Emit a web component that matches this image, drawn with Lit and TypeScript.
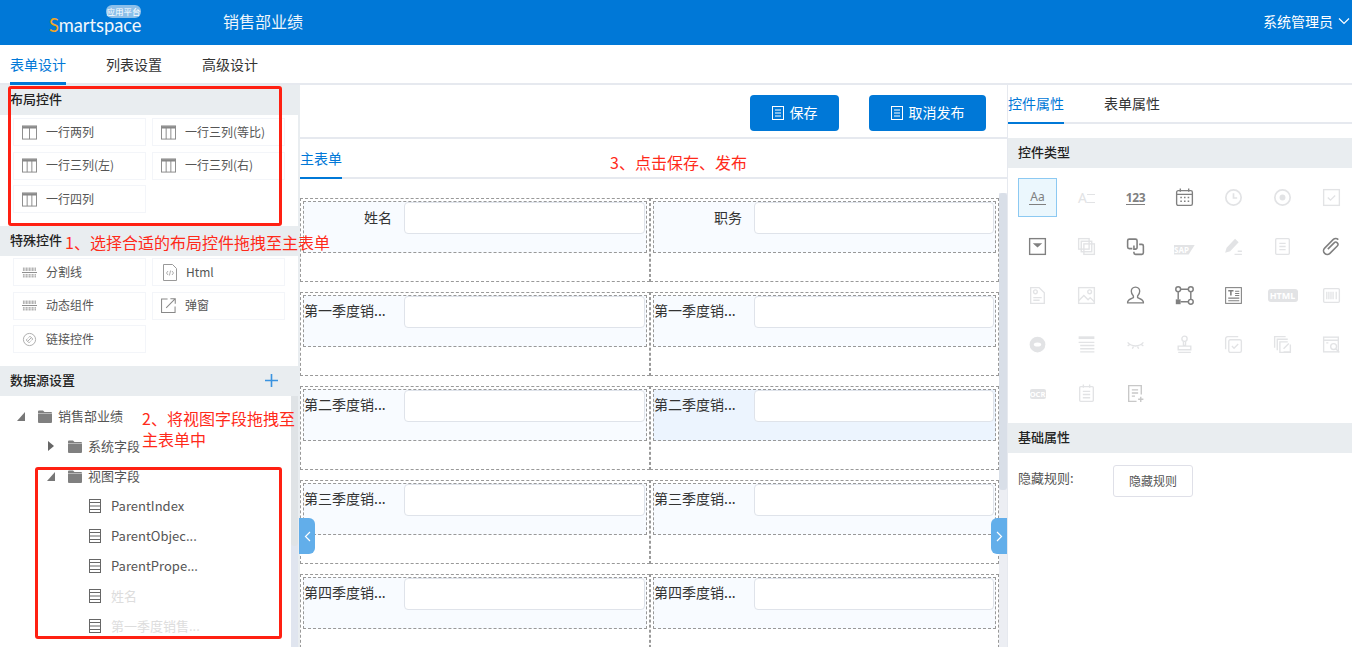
import { LitElement, html, css, svg } from "lit";
import { customElement } from "lit/decorators.js";

const I = (c: unknown) => html`<svg class="ci" viewBox="0 0 20 20" fill="none" stroke="currentColor" stroke-width="1.300">${c}</svg>`;

const TYPES: { on?: boolean; mid?: boolean; sel?: boolean; icon: unknown }[] = [
  { on: true, sel: true, icon: html`<span class="aa">Aa</span>` },
  { icon: html`<span class="ae">A<i></i></span>` },
  { on: true, icon: html`<span class="n123">123</span>` },
  { on: true, icon: I(svg`<rect x="2.500" y="3.500" width="15" height="14" rx="1.500"/><path d="M6 1.500v3M14 1.500v3M2.500 7h15"/><path d="M6 10h1.500M9.500 10H11M13 10h1.500M6 13.500h1.500M9.500 13.500H11M13 13.500h1.500" stroke-width="1.500"/>`) },
  { icon: I(svg`<circle cx="10" cy="10" r="7.300" stroke-width="1.600"/><path d="M10 6v4.500h3.500" stroke-width="1.600"/>`) },
  { icon: I(svg`<circle cx="10" cy="10" r="7.300" stroke-width="1.600"/><circle cx="10" cy="10" r="2.800" fill="currentColor" stroke="none"/>`) },
  { icon: I(svg`<rect x="2.500" y="2.500" width="15" height="15"/><path d="M6.500 10l2.500 2.500 4.500-4.500"/>`) },

  { on: true, icon: I(svg`<rect x="2.500" y="2.500" width="15" height="15"/><path d="M5.500 7h9L10 11z" fill="currentColor" stroke="none"/>`) },
  { icon: I(svg`<rect x="2.500" y="2.500" width="10" height="10"/><rect x="5" y="5" width="10" height="10"/><rect x="7.500" y="7.500" width="10" height="10"/>`) },
  { on: true, icon: I(svg`<path d="M7 12H4a1.500 1.500 0 0 1-1.500-1.500v-6A1.500 1.500 0 0 1 4 3h6a1.500 1.500 0 0 1 1.500 1.500V11a1.500 1.500 0 0 1-1.500 1.500H8.500V9" stroke-width="1.500"/><path d="M13.500 8H16a1.500 1.500 0 0 1 1.500 1.500V16a1.500 1.500 0 0 1-1.500 1.500h-6A1.500 1.500 0 0 1 8.500 16v-1" stroke-width="1.500"/>`) },
  { icon: html`<span class="sap">SAP</span>` },
  { icon: I(svg`<path d="M3 15l1-3.500 7.500-8 2.500 2.500-7.500 8z" fill="currentColor"/><path d="M11 17.500h7M14 14.500h4"/>`) },
  { icon: I(svg`<rect x="3.500" y="2.500" width="13" height="15" rx="1"/><path d="M7 7h6M7 10h6M7 13h6"/>`) },
  { on: true, icon: I(svg`<path d="M16.500 3.500c-1.500-1.500-3.500-1.500-5 0l-8 8c-1.500 1.500-1.500 3.500 0 5s3.500 1.500 5 0l7-7c1-1 1-2 0-3s-2-1-3 0l-6 6" stroke-width="1.500"/>`) },

  { icon: I(svg`<path d="M3.500 2.500h8l5 5v10h-13z"/><circle cx="8" cy="6.500" r="1.800"/><path d="M6 12h8M6 14.500h6"/>`) },
  { icon: I(svg`<rect x="2.500" y="2.500" width="15" height="15"/><circle cx="13" cy="6.500" r="1.800"/><path d="M2.500 15l5-5 4 4 2-2 4 4"/>`) },
  { on: true, icon: I(svg`<path d="M10 2c-2.800 0-4 2-4 4 0 2 1 3.500 2 4.500v1.500c-2 1-5 1.500-5.500 4v1h15v-1c-.5-2.500-3.500-3-5.500-4v-1.500c1-1 2-2.500 2-4.500 0-2-1.200-4-4-4z"/>`) },
  { on: true, icon: I(svg`<circle cx="4" cy="4" r="2.300" stroke-width="1.400"/><circle cx="16" cy="4" r="2.300" stroke-width="1.400"/><circle cx="16" cy="16" r="2.300" stroke-width="1.400"/><rect x="1.700" y="13.700" width="4.600" height="4.600" fill="currentColor" stroke="none"/><path d="M6.300 4h7.400M4 6.300v7.400M16 6.300v7.400M6.300 16h7.400" stroke-width="1.400"/>`) },
  { on: true, icon: I(svg`<rect x="2.500" y="2.500" width="15" height="15" stroke-width="1"/><path d="M5 5.500h5M7.500 5.500v4.500" stroke-width="1.500"/><path d="M11.500 6h4M11.500 8h4M11.500 10h4M5 12.500h10.500M5 15h10.500" stroke-width="1"/>`) },
  { icon: html`<span class="hb">HTML</span>` },
  { icon: I(svg`<rect x="2.500" y="3.500" width="15" height="13" rx="1"/><path d="M5.500 6.500v7M7.500 6.500v7M9.500 6.500v7M11.500 6.500v7M14.500 6.500v7" stroke-width="1.200"/>`) },

  { icon: I(svg`<circle cx="10" cy="10" r="7.500" fill="currentColor" stroke="none"/><ellipse cx="10" cy="10" rx="3.500" ry="2" fill="#fff" stroke="none"/>`) },
  { icon: I(svg`<path d="M2.500 3.500h15" stroke-width="2.600"/><path d="M2.500 8h15M4 11h13.500M4 14h13.500M4 17h13.500"/>`) },
  { icon: I(svg`<path d="M2.500 8c4 4.500 11 4.500 15 0M4.500 10l-2 1.500M8 12l-1 2M12 12l1 2M15.500 10l2 1.500"/>`) },
  { icon: I(svg`<circle cx="10" cy="4.500" r="2.500"/><path d="M9 7v4h2V7M4 11.500h12v3.500H4zM4 17.500h12"/>`) },
  { icon: I(svg`<path d="M14.500 2.500H4.500a2 2 0 0 0-2 2v10"/><rect x="5.500" y="5.500" width="12" height="12" rx="1.500"/><path d="M8.500 11.500l2 2 4-4"/>`) },
  { icon: I(svg`<path d="M13 2.500H2.500V13M15 5H5v10.500"/><path d="M17.500 10v7.500h-10V7.500H15M11 14l5-5M11 17h6"/>`) },
  { icon: I(svg`<rect x="2.500" y="3" width="14" height="14"/><path d="M2.500 6h14M5 8.500h2" /><circle cx="12" cy="12" r="2.800"/><path d="M14 14l3.500 3.500"/>`) },

  { icon: html`<span class="ocr">OCR</span>` },
  { icon: I(svg`<rect x="3.500" y="3.500" width="13" height="14" rx="1"/><path d="M7 1.500v3M13 1.500v3M6.500 8h7M6.500 11h7M6.500 14h7"/>`) },
  { mid: true, icon: I(svg`<path d="M11 17.500H3.500v-15h12V11M6.500 6.500h6M6.500 9.500h6M6.500 12.500h3M15 13v5M12.500 15.500h5"/>`) },
];

const docIcon = html`<svg class="doc" viewBox="0 0 12 14" fill="none" stroke="#fff" stroke-width="1"><rect x=".5" y=".5" width="11" height="13"/><path d="M3 4h6M3 7h6M3 10h6"/></svg>`;
const tableIcon = html`<svg class="li" viewBox="0 0 16 15" fill="none" stroke="#888" stroke-width="1"><rect x=".5" y=".5" width="15" height="14"/><path d="M.5 2h15" stroke-width="2.500"/><path d="M5.500 2v12.500M10.500 2v12.500"/></svg>`;
const twoCol = html`<svg class="li" viewBox="0 0 16 15" fill="none" stroke="#888" stroke-width="1"><rect x=".5" y=".5" width="15" height="14"/><path d="M.5 2h15" stroke-width="2.500"/><path d="M8 2v12.500"/></svg>`;
const hatch = html`<svg class="li" viewBox="0 0 16 15" fill="none"><path d="M1 3h14M1 5h14M1 10h14M1 12h14" stroke="#aaa" stroke-width="1.800" stroke-dasharray="1 .6"/><path d="M0 7.500h16" stroke="#888"/></svg>`;
const htmlDoc = html`<svg class="li h" viewBox="0 0 14 17" fill="none" stroke="#999"><path d="M.5.5h9l4 4v12H.5z"/><path d="M5 7L3.500 9 5 11M9 7l1.500 2L9 11M7.600 6.500l-1.200 5" stroke-width=".8"/></svg>`;
const popup = html`<svg class="li" viewBox="0 0 16 16" fill="none" stroke="#888" stroke-width="1.100"><path d="M7 1H.6v14.400H15V9"/><path d="M5.500 10.500L15 1M10 .8h5.200V6"/></svg>`;
const linkIco = html`<svg class="li" viewBox="0 0 16 16" fill="none" stroke="#aaa"><circle cx="8" cy="8" r="6.500"/><path d="M6 10l4-4M7 6l1.500-1.500 3 3L10 9M9 10l-1.500 1.500-3-3L6 7"/></svg>`;
const folder = html`<svg class="fo" viewBox="0 0 14 13"><path d="M0 1.500A1 1 0 0 1 1 .5h4l1.500 1.500H13a1 1 0 0 1 1 1V12a1 1 0 0 1-1 1H1a1 1 0 0 1-1-1z" fill="#808080"/><path d="M0 3.500h14" stroke="#c8c8c8" stroke-width=".8"/></svg>`;
const leaf = html`<svg class="lf" viewBox="0 0 12 14" fill="none" stroke="#666"><rect x=".5" y=".5" width="11" height="13"/><path d="M.5 3.500h11M.5 7h11M.5 10.500h11"/></svg>`;

const layouts = [
  [twoCol, "一行两列"], [tableIcon, "一行三列(等比)"], [tableIcon, "一行三列(左)"], [tableIcon, "一行三列(右)"], [tableIcon, "一行四列"],
] as const;
const specials = [
  [hatch, "分割线"], [htmlDoc, "Html"], [hatch, "动态组件"], [popup, "弹窗"], [linkIco, "链接控件"],
] as const;
const rows = [
  ["姓名", "职务", false],
  ["第一季度销...", "第一季度销...", false],
  ["第二季度销...", "第二季度销...", true],
  ["第三季度销...", "第三季度销...", false],
  ["第四季度销...", "第四季度销...", false],
] as const;
const leaves = [
  ["ParentIndex", false], ["ParentObjec...", false], ["ParentPrope...", false], ["姓名", true], ["第一季度销售...", true],
] as const;

@customElement("app-root")
export class AppRoot extends LitElement {
  static styles = css`
    :host { display: block; position: relative; width: 1352px; height: 647px; overflow: hidden; background: #fff;
      font-family: "Noto Sans CJK SC", "Noto Sans", sans-serif; font-size: 13px; color: #333; }
    * { box-sizing: border-box; }
    .top { height: 45px; background: #0078d7; color: #fff; display: flex; align-items: center; }
    .logo { position: relative; margin-left: 49px; width: 174px; font: 400 18.300px/20px Lato, sans-serif; color: #f2f7fc; margin-top: 5px; }
    .logo b { color: #f5a623; font-weight: 400; }
    .bubble { position: absolute; left: 57px; top: -10px; width: 35px; height: 13px; border-radius: 6px; background: #8cbfe9; color: #fff;
      font: 8.500px/12px "Noto Sans CJK SC", sans-serif; text-align: center; white-space: nowrap; }
    .title { font-size: 16px; flex: 1; color: #eef6fc; padding-bottom: 4px; }
    .user { font-size: 14px; display: flex; align-items: center; gap: 5px; padding: 0 2px 4px 0; }
    .user svg { width: 12px; height: 8px; }
    .nav { height: 40px; display: flex; gap: 40px; padding-left: 10px; border-bottom: 2px solid #e6e9ef; font-size: 14px; }
    .tab { height: 40px; line-height: 39px; color: #333; white-space: nowrap; }
    .tab.act { color: #0078d7; border-bottom: 3px solid #0078d7; }
    .main { display: flex; height: 562px; }
    .left { width: 300px; border-right: 2px solid #e9edf0; display: flex; flex-direction: column; overflow: hidden; }
    .hd { height: 30px; flex: none; background: #e9edf0; padding-left: 10px; line-height: 28px; font-weight: 500; color: #222; display: flex; justify-content: space-between; }
    .plus { width: 13px; height: 13px; margin: 8px 20px 0 0; }
    .items { height: 111px; flex: none; padding: 3px 0 0 13px; display: grid; grid-template-columns: 133px 133px; grid-auto-rows: 28px; column-gap: 6px; row-gap: 5.500px; align-content: start; }
    .items.sp { height: 110px; padding-top: 2px; }
    .it { border: 1px solid #f3f5f9; display: flex; align-items: center; padding: 0 0 0 8px; gap: 9px; font-size: 12px; color: #555; white-space: nowrap; }
    .it span { margin-top: -2px; }
    .li { width: 15px; height: 15px; flex: none; }
    .li.h { margin-left: 2px; width: 14px; height: 17px; }
    .treewrap { flex: 1; display: flex; overflow: hidden; }
    .tree { flex: 1; padding-top: 5px; }
    .tr { height: 30px; display: flex; align-items: center; color: #555; white-space: nowrap; }
    .tr span { margin-top: -2px; }
    .tr.d0 { padding-left: 17px; }
    .tr.d1 { padding-left: 47px; }
    .tr.d2 { padding-left: 89px; }
    .tr.off { color: #ddd; }
    .arrow { width: 8px; height: 10px; margin-right: 13px; flex: none; }
    .fo { width: 14px; height: 13px; margin-right: 6px; flex: none; }
    .lf { width: 12px; height: 14px; margin-right: 10px; flex: none; }
    .sb { width: 7px; background: #e0e5ef; flex: none; }
    .sb div { height: 150px; background: #dfe3e6; border-radius: 0 0 4px 4px; }
    .center { width: 708px; border-right: 1px solid #e6e9ef; display: flex; flex-direction: column; overflow: hidden; }
    .tools { height: 54px; flex: none; border-bottom: 2px solid #e6e9ef; display: flex; justify-content: flex-end; gap: 30px; padding: 10px 21px 0 0; }
    .btn { height: 36px; background: #0078d7; color: #fff; border-radius: 4px; font-size: 14px; display: flex; align-items: center; justify-content: center; gap: 6px; }
    .btn span { margin-top: -2px; }
    .btn.a { width: 89px; }
    .btn.b { width: 117px; }
    .doc { width: 12px; height: 14px; }
    .ctabs { height: 40px; flex: none; border-bottom: 2px solid #e6e9ef; font-size: 14px; }
    .ctabs .tab { width: 42px; height: 40px; line-height: 38px; border-bottom-width: 2px; }
    .body { flex: 1; display: flex; overflow: hidden; }
    .form { flex: 1; padding-top: 19px; display: flex; flex-direction: column; gap: 10px; }
    .frow { display: grid; grid-template-columns: 350px 349px; flex: none; height: 84px; }
    .cell { border: 1px dashed #999; height: 84px; padding: 2px; }
    .inner { height: 52px; border: 1px dashed #999; background: #f8fbff; display: flex; align-items: flex-start; }
    .inner.hl { background: #ecf4fe; }
    .lab { width: 100px; flex: none; height: 31px; line-height: 30px; font-size: 14px; color: #333; text-align: right; padding-right: 12px; }
    .lab.long { text-align: left; padding-right: 0; line-height: 28px; white-space: nowrap; }
    .ipt { flex: 1; height: 32px; background: #fff; border: 1px solid #dfe3ea; border-radius: 4px; margin-right: 1px; }
    .vs { width: 8px; flex: none; margin-top: 14px; background: #eceef3; }
    .vs div { height: 297px; background: #d9dfe8; border-radius: 3px; }
    .right { flex: 1; overflow: hidden; }
    .rtabs { height: 39px; display: flex; gap: 40px; border-bottom: 2px solid #e6e9ef; font-size: 14px; margin-bottom: 14px; }
    .rtabs .tab { height: 39px; line-height: 37px; border-bottom-width: 2px; }
    .gridico { height: 255px; padding: 10px 0 0 10px; display: grid; grid-template-columns: repeat(7, 39px); grid-auto-rows: 39px; gap: 10px; }
    .ty { display: flex; align-items: center; justify-content: center; color: #e2e3e5; }
    .ty.on { color: #808080; }
    .ty.mid { color: #c8c8c8; }
    .ty.sel { border: 1px solid #8cc9f2; background: #ebf7fd; }
    .ci { width: 21px; height: 21px; }
    .aa { font: 12px/14px "Noto Sans", sans-serif; border-bottom: 1px solid currentColor; padding: 0 1px; }
    .ae { font: 14px/14px "Noto Sans", sans-serif; display: flex; }
    .ae i { width: 8px; height: 9px; margin-top: 3px; border-top: 1px solid currentColor; border-bottom: 1px solid currentColor; display: block; }
    .n123 { font: 700 12px/13px "Noto Sans", sans-serif; letter-spacing: -.3px; border-bottom: 1px solid currentColor; }
    .sap { width: 21px; height: 10px; margin-top: 6px; background: #e2e3e5; color: #fff; font: 700 8px/10px "Noto Sans", sans-serif; clip-path: polygon(0 0, 100% 0, 70% 100%, 0 100%); }
    .hb { display: block; width: 30px; height: 13px; border-radius: 3px; background: #e2e3e5; color: #fff; text-align: center; font: 700 9px/13px "Noto Sans", sans-serif; }
    .ocr { width: 16px; height: 10px; border-radius: 2px; background: #e2e3e5; color: #fff; text-align: center; font: 700 7.500px/10px "Noto Sans", sans-serif; }
    .rule { display: flex; align-items: flex-start; padding: 12px 0 0 10px; }
    .rule span { width: 95px; color: #555; line-height: 26px; }
    .rule button { width: 80px; height: 32px; background: #fff; border: 1px solid #dfe0e8; border-radius: 3px; font: 12px "Noto Sans CJK SC", sans-serif; color: #555; padding: 0 0 2px; }
    .fold { position: absolute; top: 518px; width: 16px; height: 36px; background: #62aeea; display: flex; align-items: center; justify-content: center; }
    .fold.l { left: 299px; border-radius: 0 6px 6px 0; }
    .fold.r { left: 991px; border-radius: 6px 0 0 6px; }
    .fold svg { width: 7px; height: 11px; }
    .box { position: absolute; border: 3px solid #ff2012; border-radius: 3px; }
    .box.a { left: 8px; top: 86px; width: 274px; height: 140px; }
    .box.b { left: 35px; top: 467px; width: 247px; height: 172px; }
    .note { position: absolute; font-size: 16px; line-height: 20px; color: #ff2a1a; white-space: nowrap; }
    .n1 { left: 65px; top: 232px; }
    .n2 { left: 142px; top: 408px; }
    .n3 { left: 142px; top: 429px; }
    .n4 { left: 610px; top: 152px; }
  `;

  render() {
    return html`
      <div class="top">
        <div class="logo"><b>S</b>martspace<div class="bubble">应用平台</div></div>
        <div class="title">销售部业绩</div>
        <div class="user">系统管理员<svg viewBox="0 0 12 8" fill="none" stroke="#fff" stroke-width="1.200"><path d="M1 1.500l5 5 5-5"/></svg></div>
      </div>
      <div class="nav"><div class="tab act">表单设计</div><div class="tab">列表设置</div><div class="tab">高级设计</div></div>
      <div class="main">
        <div class="left">
          <div class="hd">布局控件</div>
          <div class="items">${layouts.map(([i, t]) => html`<div class="it">${i}<span>${t}</span></div>`)}</div>
          <div class="hd">特殊控件</div>
          <div class="items sp">${specials.map(([i, t]) => html`<div class="it">${i}<span>${t}</span></div>`)}</div>
          <div class="hd">数据源设置<svg class="plus" viewBox="0 0 13 13" stroke="#3a93e0" stroke-width="1.600"><path d="M6.500 0v13M0 6.500h13"/></svg></div>
          <div class="treewrap">
            <div class="tree">
              <div class="tr d0"><svg class="arrow" viewBox="0 0 8 10"><path d="M8 1v9H0z" fill="#777"/></svg>${folder}<span>销售部业绩</span></div>
              <div class="tr d1"><svg class="arrow" viewBox="0 0 8 10"><path d="M1 0l6 5-6 5z" fill="#666"/></svg>${folder}<span>系统字段</span></div>
              <div class="tr d1"><svg class="arrow" viewBox="0 0 8 10"><path d="M8 1v9H0z" fill="#777"/></svg>${folder}<span>视图字段</span></div>
              ${leaves.map(([t, off]) => html`<div class="tr d2 ${off ? "off" : ""}">${leaf}<span>${t}</span></div>`)}
            </div>
            <div class="sb"><div></div></div>
          </div>
        </div>
        <div class="center">
          <div class="tools">
            <div class="btn a">${docIcon}<span>保存</span></div>
            <div class="btn b">${docIcon}<span>取消发布</span></div>
          </div>
          <div class="ctabs"><div class="tab act">主表单</div></div>
          <div class="body">
            <div class="form">
              ${rows.map(([a, b, hl]) => html`<div class="frow">
                <div class="cell"><div class="inner"><div class="lab ${a.length > 2 ? "long" : ""}">${a}</div><div class="ipt"></div></div></div>
                <div class="cell"><div class="inner ${hl ? "hl" : ""}"><div class="lab ${b.length > 2 ? "long" : ""}">${b}</div><div class="ipt"></div></div></div>
              </div>`)}
            </div>
            <div class="vs"><div></div></div>
          </div>
        </div>
        <div class="right">
          <div class="rtabs"><div class="tab act">控件属性</div><div class="tab">表单属性</div></div>
          <div class="hd">控件类型</div>
          <div class="gridico">${TYPES.map((t) => html`<div class="ty ${t.on ? "on" : ""} ${t.mid ? "mid" : ""} ${t.sel ? "sel" : ""}">${t.icon}</div>`)}</div>
          <div class="hd">基础属性</div>
          <div class="rule"><span>隐藏规则:</span><button>隐藏规则</button></div>
        </div>
      </div>
      <div class="fold l"><svg viewBox="0 0 7 11" fill="none" stroke="#fff" stroke-width="1.200"><path d="M6 1L1.500 5.500 6 10"/></svg></div>
      <div class="fold r"><svg viewBox="0 0 7 11" fill="none" stroke="#fff" stroke-width="1.200"><path d="M1 1l4.500 4.500L1 10"/></svg></div>
      <div class="box a"></div>
      <div class="box b"></div>
      <div class="note n1">1、选择合适的布局控件拖拽至主表单</div>
      <div class="note n2">2、将视图字段拖拽至</div>
      <div class="note n3">主表单中</div>
      <div class="note n4">3、点击保存、发布</div>
    `;
  }
}
